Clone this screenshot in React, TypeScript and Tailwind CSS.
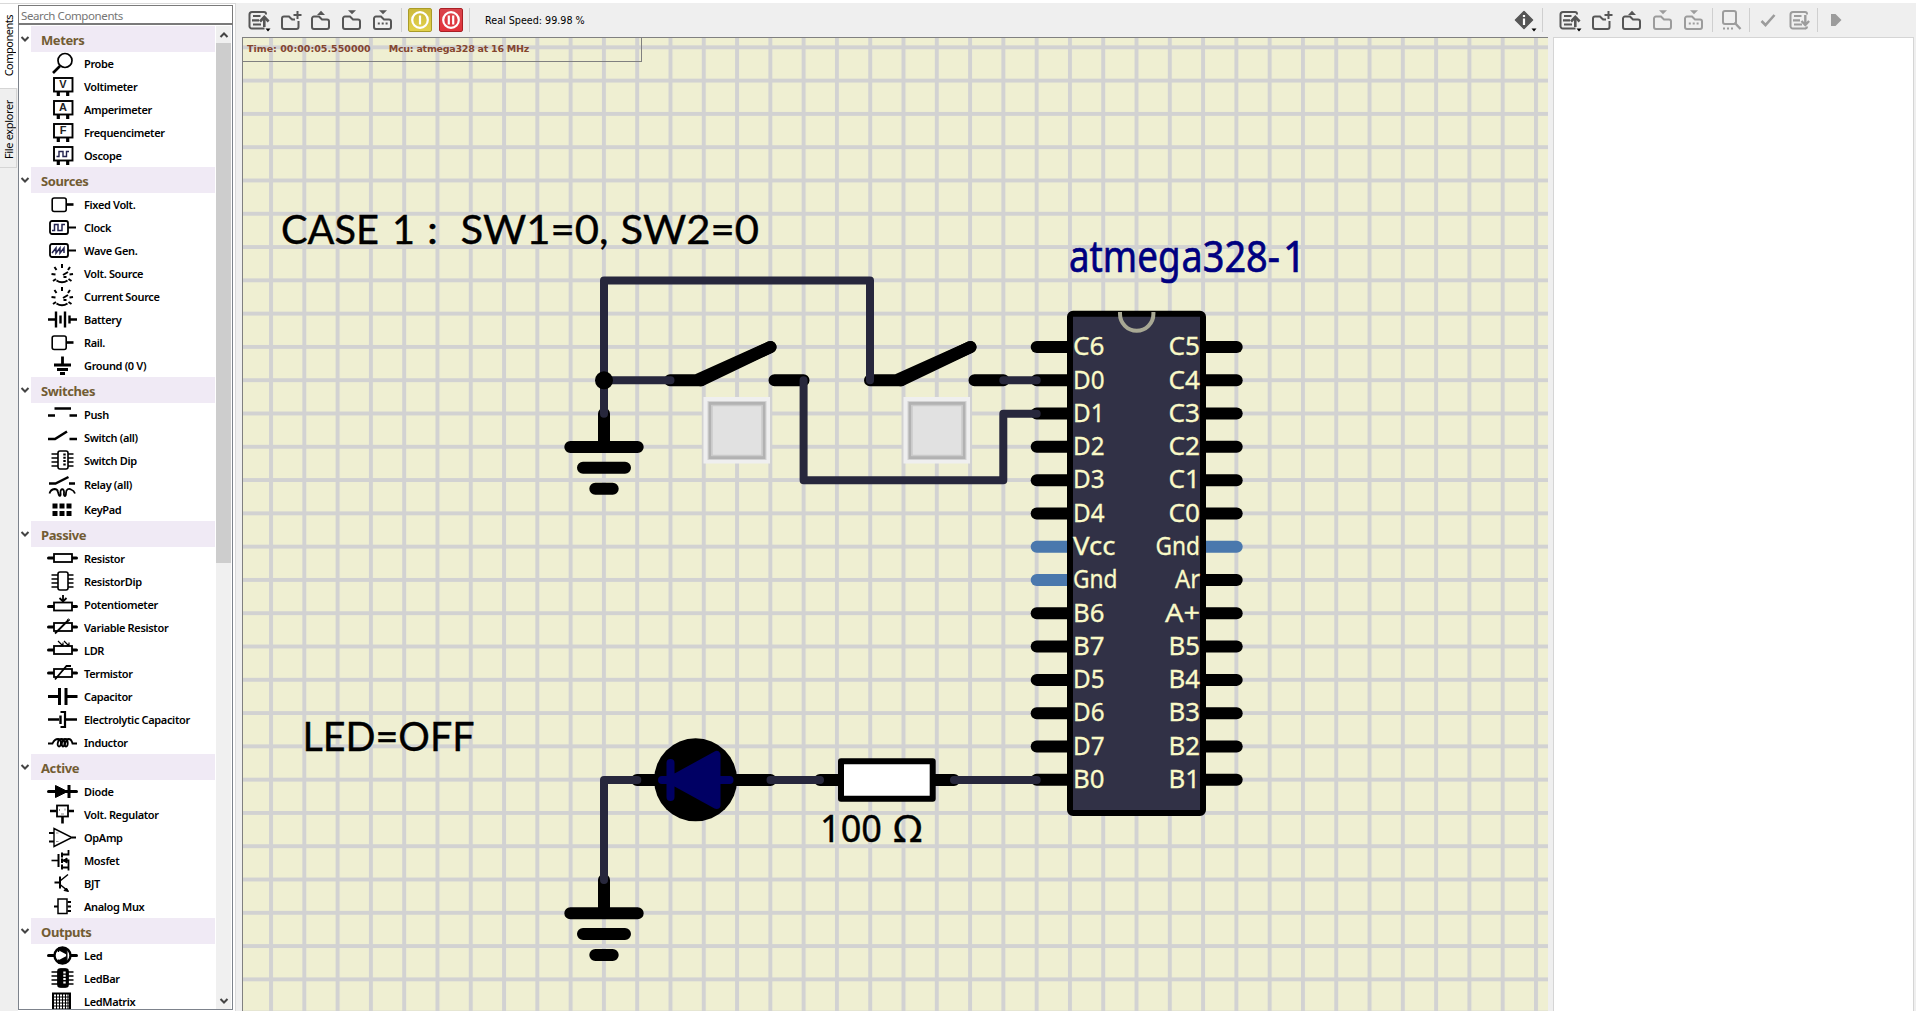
import React from 'react';

type IconFn = () => React.ReactNode;

const chipBody = (
  <>
    <rect x="12" y="2" width="10" height="18" rx="2" fill="white" strokeWidth="1.6" />
    <path d="M5.5 5H12M5.5 9H12M5.5 13H12M5.5 17H12M22 5h5.5M22 9h5.5M22 13h5.5M22 17h5.5" strokeWidth="1.6" />
  </>
);

const resistorBody = (y: number) => (
  <>
    <path d={`M2.5 ${y}H8M26 ${y}h4.500`} strokeWidth="3" strokeLinecap="round" />
    <rect x="8" y={y - 4} width="18" height="8" fill="white" strokeWidth="1.8" />
  </>
);

const meter = (letter: string) => (
  <>
    <rect x="8" y="3" width="18.500" height="13.500" strokeWidth="1.900" />
    <path d="M12.300 17v4M21.700 17v4" strokeWidth="3.200" />
    <text x="17" y="13.300" textAnchor="middle" fontFamily="Liberation Sans, sans-serif" fontWeight="700" fontSize="11" fill="#222" stroke="none">
      {letter}
    </text>
  </>
);

const boxLead = (
  <>
    <rect x="6.200" y="5" width="14" height="13.500" rx="2" strokeWidth="1.6" />
    <path d="M20.500 11.500h7" strokeWidth="2.6" />
  </>
);

const waveBox = (d: string) => (
  <>
    <rect x="4" y="5" width="18" height="13" rx="2" strokeWidth="1.8" />
    <path d="M22 11.500h8" strokeWidth="2" />
    <path d={d} stroke="#23234f" strokeWidth="1.5" />
  </>
);

const dial = (
  <path
    d="M16 2v4M8.500 5l2 3M24 5l-2 3M5.500 12l4 .5M23.500 12.500l3.500-.5M7 19l3-2M25.500 19l-3-2M10.500 18.500q5.500 3.500 11 0M17 13l5-3M17.500 15h3"
    strokeWidth="2"
  />
);

const icons: Record<string, IconFn> = {
  Probe: () => (
    <>
      <circle cx="19" cy="8.500" r="7" strokeWidth="1.7" />
      <path d="M14 14L7 21" strokeWidth="2.6" />
    </>
  ),
  Voltimeter: () => meter('V'),
  Amperimeter: () => meter('A'),
  Frequencimeter: () => meter('F'),
  Oscope: () => (
    <>
      {meter('')}
      <path d="M10.500 12.500h2.500v-5h4v5h3.500v-5h2.500" stroke="#23234f" strokeWidth="1.400" />
    </>
  ),
  'Fixed Volt.': () => boxLead,
  Clock: () => waveBox('M6 14.500h2.500v-6h3.500v6h4v-6h3'),
  'Wave Gen.': () => waveBox('M6 14l4-5v5l4-5v5l4-5v5'),
  'Volt. Source': () => dial,
  'Current Source': () => dial,
  Battery: () => (
    <>
      <path d="M2 11.500h8M24 11.500h7" strokeWidth="2.4" />
      <path d="M10 3.500v16M19 3.500v16" strokeWidth="2.4" />
      <path d="M14.500 7.500v8M23.500 7.500v8" strokeWidth="2.4" />
    </>
  ),
  'Rail.': () => boxLead,
  'Ground (0 V)': () => <path d="M16.500 2.500v8M8 11h17M11 15.500h11M14 19.500h5" strokeWidth="2.800" />,
  Push: () => <path d="M2 12.500h7M23.500 12.500h7.500M8.500 5.500H25" strokeWidth="2.600" />,
  'Switch (all)': () => <path d="M2 13h7L21 5.500M23.500 13h7.500" strokeWidth="2.600" />,
  'Switch Dip': () => (
    <>
      {chipBody}
      <path d="M18.500 4.500v13" strokeWidth="2.400" strokeDasharray="2 1.300" />
    </>
  ),
  'Relay (all)': () => (
    <>
      <path d="M3 9.500h6.500L22.500 3M23 9.500h6" strokeWidth="2.400" />
      <path d="M3.500 19.500q1-4 5-4.500 3 0 3.500 3c1 5 3 5 2.500 1-.5-5 4-5 3.500 0-.5 4 2 4 2 0 0-4 3-5 5-3.500q3 1 4 4" strokeWidth="1.800" />
    </>
  ),
  KeyPad: () => <path d="M6.500 8h5M13.500 8h5M20.500 8h5M6.500 15.500h5M13.500 15.500h5M20.500 15.500h5" strokeWidth="5" />,
  Resistor: () => resistorBody(11),
  ResistorDip: () => chipBody,
  Potentiometer: () => (
    <>
      {resistorBody(13.500)}
      <path d="M17 2v6M13.500 5l3.500 3.500L20.500 5" strokeWidth="1.800" />
    </>
  ),
  'Variable Resistor': () => (
    <>
      {resistorBody(11)}
      <path d="M9 17.500L22.500 4" strokeWidth="1.800" />
      <circle cx="22.500" cy="4" r="1" />
    </>
  ),
  LDR: () => (
    <>
      {resistorBody(11)}
      <path d="M12 2l5 5M17 3.500V7h-3.500M18 2l5 5M23 3.500V7h-3.500" strokeWidth="1.200" />
    </>
  ),
  Termistor: () => (
    <>
      {resistorBody(11)}
      <path d="M9 17.500L20.500 4H25" strokeWidth="1.800" />
    </>
  ),
  Capacitor: () => <path d="M2 11.500h11M20.500 11.500h11M13.500 3v17M20 3v17" strokeWidth="3" />,
  'Electrolytic Capacitor': () => (
    <>
      <path d="M2 11.500h11M19 11.500h12" strokeWidth="2.400" />
      <path d="M14.500 7.500v8.500" strokeWidth="2.400" />
      <path d="M14.500 4h4.500v15h-4.500" strokeWidth="2.200" />
    </>
  ),
  Inductor: () => (
    <path
      d="M2 12.500h4.500q2-4.500 5.500-4.500c4 0 3.500 7.500 1 7.500s-1.500-7.500 2.500-7.500 3.500 7.500 1.500 7.500-1.500-7.500 2-7.500 3.500 7.500 1 7.500 0-7.500 2.500-7.500q3 0 4 4.500H31"
      strokeWidth="1.800"
    />
  ),
  Diode: () => (
    <>
      <path d="M2.500 11.500h28" strokeWidth="3" strokeLinecap="round" />
      <path d="M9.500 5.500v12l12-6z" fill="black" />
      <path d="M23 5v13" strokeWidth="3" />
    </>
  ),
  'Volt. Regulator': () => (
    <>
      <rect x="11" y="2.500" width="11" height="11" strokeWidth="1.800" />
      <path d="M4 8h6.500M22.500 8H28M16.500 14v6.500" strokeWidth="2.600" />
      <path d="M13.500 6v2M19 5.500v2M15 11h3" stroke="#888" strokeWidth="1" />
    </>
  ),
  OpAmp: () => (
    <>
      <path d="M8 2.500v18L26 11.500z" strokeWidth="1.400" />
      <path d="M3 7h5M3 15.500h5M26 11.500h4" strokeWidth="1.800" />
      <path d="M10 7h2.500M10 15.500h2.500" strokeWidth=".8" stroke="#777" />
    </>
  ),
  Mosfet: () => (
    <>
      <path d="M5.500 11.500H12" strokeWidth="1.600" />
      <path d="M12.500 5v13M16 3.500v5M16 9.500v4.500M16 15.500v5" strokeWidth="2" />
      <path d="M16 5.500h6.500V1M16 11.500h6.500v10M16 18.500h6" strokeWidth="1.800" />
      <path d="M17 11.500l4-2.500v5z" fill="black" />
    </>
  ),
  BJT: () => (
    <>
      <path d="M8.500 10.500H14M14 4.500v12" strokeWidth="2" />
      <path d="M14 9l8-6.500M14 12.500l8 6.500" strokeWidth="1.500" />
      <path d="M22.500 19.500l-4.500-1 2.500-2.500z" fill="black" />
    </>
  ),
  'Analog Mux': () => (
    <>
      <rect x="12" y="4" width="9" height="14.500" strokeWidth="1.500" />
      <path d="M8 11.500h4M21.500 7H25M21.500 11.500H25M21.500 16H25" strokeWidth="2" />
    </>
  ),
  Led: () => (
    <>
      <path d="M2.500 11.500h28" strokeWidth="3" strokeLinecap="round" />
      <circle cx="16.500" cy="11.500" r="8" fill="white" strokeWidth="2.400" />
      <path d="M12 3.500h7l1.500 1v6L12 6zM20.500 19l-8.500.5V16.500l8.500-4.500z" fill="black" stroke="none" />
      <path d="M12.500 4v4M12.500 15.500v4M20.800 5v13" strokeWidth="1.400" />
    </>
  ),
  LedBar: () => (
    <>
      {chipBody}
      <rect x="12" y="2" width="10" height="18" rx="3" fill="black" />
      <path d="M18.500 4.500v13" stroke="white" strokeWidth="2.400" strokeDasharray="2 1.300" />
    </>
  ),
  LedMatrix: () => (
    <>
      <rect x="7" y="3.500" width="17" height="18" strokeWidth="2" />
      <path d="M10.500 4v17M13.500 4v17M16.500 4v17M19.500 4v17M22 4v17M7 7h17M7 10h17M7 13h17M7 16h17M7 19h17" strokeWidth="1" />
    </>
  ),
};

const groups: { title: string; items: string[] }[] = [
  { title: 'Meters', items: ['Probe', 'Voltimeter', 'Amperimeter', 'Frequencimeter', 'Oscope'] },
  {
    title: 'Sources',
    items: ['Fixed Volt.', 'Clock', 'Wave Gen.', 'Volt. Source', 'Current Source', 'Battery', 'Rail.', 'Ground (0 V)'],
  },
  { title: 'Switches', items: ['Push', 'Switch (all)', 'Switch Dip', 'Relay (all)', 'KeyPad'] },
  {
    title: 'Passive',
    items: [
      'Resistor',
      'ResistorDip',
      'Potentiometer',
      'Variable Resistor',
      'LDR',
      'Termistor',
      'Capacitor',
      'Electrolytic Capacitor',
      'Inductor',
    ],
  },
  { title: 'Active', items: ['Diode', 'Volt. Regulator', 'OpAmp', 'Mosfet', 'BJT', 'Analog Mux'] },
  { title: 'Outputs', items: ['Led', 'LedBar', 'LedMatrix'] },
];

function Chevron({ up = false }: { up?: boolean }) {
  return (
    <svg width="10" height="8" viewBox="0 0 10 8" fill="none" stroke="#444" strokeWidth="2">
      <path d={up ? 'M1.500 6L5 2.500 8.500 6' : 'M1.500 2L5 5.500 8.500 2'} />
    </svg>
  );
}

function SideTabs() {
  return (
    <div className="flex w-[18px] shrink-0 flex-col font-['Noto_Sans'] text-[11px] text-black">
      <div className="flex h-[85px] items-center justify-center border-t border-[#d9d9d9] bg-white pr-0.5">
        <span className="rotate-180 whitespace-nowrap leading-none tracking-[-0.5px] [writing-mode:vertical-rl]">Components</span>
      </div>
      <div className="flex h-20 w-[17px] items-center justify-center border border-l-0 border-[#d5d5d5] bg-[#efefef] pt-1">
        <span className="rotate-180 whitespace-nowrap leading-none tracking-[-0.35px] [writing-mode:vertical-rl]">File explorer</span>
      </div>
    </div>
  );
}

function ComponentTree() {
  return (
    <div className="flex min-h-0 flex-1 border border-t-0 border-[#7d838c] bg-white pt-px">
      <div className="min-w-0 flex-1 overflow-hidden">
        {groups.map((g) => (
          <section key={g.title}>
            <div className="flex h-[26px]">
              <div className="flex w-3 items-center justify-center">
                <Chevron />
              </div>
              <div className="mr-px flex flex-1 items-center bg-[#f0eaf5] pl-2.5 pt-[3px] font-['Noto_Sans'] text-[13px] font-bold text-[#725c33]">
                <span className="tracking-[-0.4px]">{g.title}</span>
              </div>
            </div>
            {g.items.map((name) => (
              <div key={name} className={name === 'Relay (all)' ? 'flex h-[26px] items-center pl-[27px]' : 'flex h-[23px] items-center pl-[27px]'}>
                <svg width="32" height="23" viewBox="0 0 32 23" fill="none" stroke="black" className="shrink-0">
                  {icons[name]()}
                </svg>
                <span className="ml-[6px] mt-px whitespace-nowrap font-['Noto_Sans'] text-[11px] font-semibold tracking-[-0.35px] text-black">
                  {name}
                </span>
              </div>
            ))}
          </section>
        ))}
      </div>
      <div className="flex w-[15px] flex-col bg-[#f0f0f0]">
        <div className="flex h-[17px] items-center justify-center">
          <Chevron up />
        </div>
        <div className="h-[520px] bg-[#cdcdcd]" />
        <div className="mt-auto flex h-[17px] items-center justify-center">
          <Chevron />
        </div>
      </div>
      <div className="w-px bg-white" />
    </div>
  );
}

function Caret() {
  return <path d="M19.500 20.500h5l-2.500 3z" fill="black" stroke="none" />;
}

const folder = 'M5 8.500h5l3 3h5a2 2 0 0 1 2 2v5.500a2 2 0 0 1-2 2H5a2 2 0 0 1-2-2V10.500a2 2 0 0 1 2-2z';

function Tool({ kind, muted = false, className = '' }: { kind: string; muted?: boolean; className?: string }) {
  const c = muted ? '#9c9c9c' : '#565656';
  return (
    <svg width="24" height="24" viewBox="0 0 24 24" fill="none" stroke={c} strokeWidth="2" className={`shrink-0 overflow-visible ${className}`}>
      {(kind === 'recent' || kind === 'upload') && (
        <>
          <path d="M20 6.500V6a2 2 0 0 0-2-2H6a2.500 2.500 0 0 0-2.500 2.500v11A2.500 2.500 0 0 0 6 20.500h12.500" />
          <path d="M7 8h7.500M6 12.300h7M7 16.500h8" strokeWidth="2.200" />
          {kind === 'recent' ? (
            <>
              <path d="M18.300 9.500v9.500" strokeWidth="2.600" />
              <path d="M14 13.500l4.300-4.500 4.300 4.500" strokeWidth="2.600" />
              <Caret />
            </>
          ) : (
            <>
              <path d="M18.300 7v9.500M14.500 13l3.800 4 3.800-4" strokeWidth="2.400" />
              <path d="M20 18.500a2 2 0 0 1-2 2" />
            </>
          )}
        </>
      )}
      {kind === 'new' && (
        <>
          <path d="M13 11.500l-3-3H5a2 2 0 0 0-2 2V19a2 2 0 0 0 2 2h12.500a2 2 0 0 0 2-2v-6" />
          <path d="M12.500 11.500H16M18.500 3v8M14.500 7h8" />
        </>
      )}
      {kind === 'open' && (
        <>
          <path d={folder} />
          <path d="M8 7h8L12 2.800z" fill={c} stroke="none" />
        </>
      )}
      {(kind === 'save' || kind === 'saveas') && (
        <>
          <path d={folder} />
          <path d="M8 2.300h8L12 6.300z" fill={c} stroke="none" />
          {kind === 'saveas' && <path d="M6.800 15.500h2M10.700 15.500h2M14.600 15.500h2" strokeWidth="2.200" />}
        </>
      )}
      {kind === 'find' && (
        <>
          <rect x="4" y="3" width="13" height="13" rx="2" />
          <path d="M15.500 14.500l6 6.500" strokeWidth="2.400" />
          <path d="M4 20.500h2M8 20.500h2M12 20.500h2" />
        </>
      )}
      {kind === 'check' && <path d="M5.500 13l4 4 9-10" strokeWidth="2.600" />}
      {kind === 'play' && <path d="M7 6h4.500l6 6-6 6H7z" fill={c} stroke="none" />}
      {kind === 'info' && (
        <>
          <path d="M12 3.500L20.500 12 12 20.500 3.500 12z" fill={c} strokeLinejoin="round" strokeWidth="1.500" />
          <path d="M12 10.500V17M12 7v2" stroke="white" strokeWidth="2.200" />
          <Caret />
        </>
      )}
    </svg>
  );
}

function Separator({ className = '' }: { className?: string }) {
  return <div className={`h-6 w-px shrink-0 bg-[#cfcfcf] ${className}`} />;
}

function RoundButton({ pause = false }: { pause?: boolean }) {
  return (
    <div
      className={
        pause
          ? 'ml-[7px] flex size-6 shrink-0 items-center justify-center rounded-[2px] border border-[#a92025] bg-linear-to-b from-[#d9444c] to-[#e2323a]'
          : 'ml-[6px] flex size-6 shrink-0 items-center justify-center rounded-[2px] border border-[#a99b28] bg-linear-to-b from-[#ccb93a] to-[#e3d24c]'
      }
    >
      <svg width="20" height="20" viewBox="0 0 20 20" fill="none" stroke="white" strokeWidth="2.200">
        <circle cx="10" cy="10" r="7.800" />
        {pause ? <path d="M7.800 5.500v9M12.200 5.500v9" /> : <path d="M10 5.500v9" />}
      </svg>
    </div>
  );
}

const leftPins = ['C6', 'D0', 'D1', 'D2', 'D3', 'D4', 'Vcc', 'Gnd', 'B6', 'B7', 'D5', 'D6', 'D7', 'B0'];
const rightPins = ['C5', 'C4', 'C3', 'C2', 'C1', 'C0', 'Gnd', 'Ar', 'A+', 'B5', 'B4', 'B3', 'B2', 'B1'];
const labelWidth: Record<string, number> = { Vcc: 42.500, Gnd: 44.500, Ar: 25, 'A+': 35 };
const isPower = (p: string, i: number) => p === 'Vcc' || (p === 'Gnd' && i > 5);

function Ground({ y }: { y: number }) {
  return (
    <path
      d={`M604 ${y}v33.300M570.300 ${y + 33.300}h67.400M583 ${y + 54}h42M595.300 ${y + 75}h17.400`}
      stroke="black"
      strokeWidth="12"
      strokeLinecap="round"
    />
  );
}

function SwitchPart({ x }: { x: number }) {
  return (
    <>
      <path d={`M${x} 380.300h31M${x + 26.500} 380.300L${x + 100.500} 347M${x + 104.500} 380.300h29`} stroke="black" strokeWidth="12" strokeLinecap="round" />
      <path d={`M${x + 31} 380.300L${x + 100.500} 347`} stroke="black" strokeWidth="12" strokeLinecap="round" />
      <rect x={x + 33.500} y="397" width="66.500" height="66.500" fill="#efefef" />
      <rect x={x + 38} y="401.500" width="58" height="58" fill="#e1e1e1" stroke="#d2d2d2" strokeWidth="1" />
      <rect x={x + 40} y="403.500" width="54" height="54" stroke="#b2b2b2" strokeWidth="3" />
      <rect x={x + 42} y="405.500" width="50" height="50" stroke="#cacaca" strokeWidth="1.500" />
    </>
  );
}

function Label({ x, y, w, children }: { x: number; y: number; w: number; children: string }) {
  return (
    <text x={x} y={y} textLength={w} lengthAdjust="spacingAndGlyphs">
      {children}
    </text>
  );
}

function Circuit() {
  return (
    <svg width="1306" height="974" viewBox="242 37 1306 974" fill="none" className="block">
      <defs>
        <pattern id="grid" x="269.050" y="45.350" width="33.288" height="33.288" patternUnits="userSpaceOnUse">
          <path d="M2 0v33.288M0 2h33.288" stroke="#d2d2d2" strokeWidth="4" />
        </pattern>
      </defs>
      <rect x="242" y="37" width="1306" height="974" fill="#efefd2" />
      <rect x="242" y="37" width="1306" height="974" fill="url(#grid)" />

      <g fill="black" stroke="black" strokeWidth=".4" fontFamily="Lato, sans-serif" fontSize="41.500">
        <Label x={281} y={244.400} w={98}>CASE</Label>
        <Label x={392} y={244.400} w={23}>1</Label>
        <Label x={427} y={244.400} w={11}>:</Label>
        <Label x={460.500} y={244.400} w={148}>SW1=0,</Label>
        <Label x={620.500} y={244.400} w={138.500}>SW2=0</Label>
        <Label x={302.500} y={750.700} w={172}>LED=OFF</Label>
      </g>

      <Ground y={413.700} />
      <Ground y={880} />
      <SwitchPart x={670} />
      <SwitchPart x={870} />

      <path d="M637 780h20M735 780h35.500M820 780h20M934 780h20" stroke="black" strokeWidth="12" strokeLinecap="round" />
      <circle cx="695.600" cy="779.800" r="41.500" fill="black" />
      <path d="M662 780h67.500M670.500 763v34M671 780l45.500-25v50z" stroke="#000064" fill="#000064" strokeWidth="8" strokeLinecap="round" strokeLinejoin="round" />
      <rect x="841" y="761.300" width="91.700" height="37.400" fill="white" stroke="black" strokeWidth="6" strokeLinejoin="round" />
      <g fontFamily="Noto Sans, sans-serif" fontSize="38" fill="black" stroke="black" strokeWidth=".4">
        <Label x={820} y={841.700} w={62}>100</Label>
        <Label x={893.500} y={841.700} w={28.500}>Ω</Label>
      </g>

      {leftPins.map((p, i) => (
        <path key={i} d={`M1036.700 ${347 + i * 33.288}H1068`} stroke={isPower(p, i) ? '#4a78ad' : 'black'} strokeWidth="12" strokeLinecap="round" />
      ))}
      {rightPins.map((p, i) => (
        <path key={i} d={`M1205 ${347 + i * 33.288}h31.700`} stroke={isPower(p, i) ? '#4a78ad' : 'black'} strokeWidth="12" strokeLinecap="round" />
      ))}
      <rect x="1070" y="313.700" width="133" height="499.300" rx="3" fill="#313146" stroke="black" strokeWidth="6" />
      <path d="M1120 312v2a16.700 16.700 0 0 0 33.400 0v-2" stroke="#a8a894" strokeWidth="4" />
      <g fill="#fafac8" stroke="#fafac8" strokeWidth=".3" fontFamily="Noto Sans, sans-serif" fontSize="25.500">
        {leftPins.map((p, i) => (
          <Label key={i} x={1073} y={355.300 + i * 33.288} w={labelWidth[p] ?? 31.500}>
            {p}
          </Label>
        ))}
        {rightPins.map((p, i) => (
          <Label key={i} x={1200 - (labelWidth[p] ?? 31.500)} y={355.300 + i * 33.288} w={labelWidth[p] ?? 31.500}>
            {p}
          </Label>
        ))}
      </g>
      <g fontFamily="Noto Sans, sans-serif" fontSize="43" fill="#000080" stroke="#000080" strokeWidth=".7">
        <Label x={1069} y={271.700} w={111.500}>atmeg</Label>
        <Label x={1181.500} y={271.700} w={98.500}>a328-</Label>
        <Label x={1283} y={271.700} w={23}>1</Label>
      </g>

      <g stroke="#27273c" strokeWidth="8" strokeLinecap="round" strokeLinejoin="round">
        <path d="M604 413.700V280.400h266v99.900M604 380.300h66.500" />
        <path d="M803.600 380.300V480.200h199.700v-66.500h33.400M1003.300 380.300h33.400" />
        <path d="M604 880V780h33.300M770.500 780H820M954 780h82.700" />
      </g>
      <circle cx="604" cy="380.300" r="9" fill="black" />
    </svg>
  );
}

export default function App() {
  return (
    <div className="flex h-[1011px] w-[1916px] overflow-hidden border-t-[3px] border-white bg-[#efefef]">
      <SideTabs />
      <aside className="flex w-[218px] shrink-0 flex-col border-r border-t border-[#d9d9d9] bg-white pb-px pr-0.5 pt-px">
        <div className="flex h-5 items-center border border-b-2 border-[#7a7a7a] bg-white pl-[2px] pt-0.5 font-['Noto_Sans'] text-[11.500px] tracking-[-0.4px] text-[#757575]">
          Search Components
        </div>
        <ComponentTree />
      </aside>
      <main className="ml-[6px] flex w-[1306px] shrink-0 flex-col">
        <div className="flex h-[34px] items-center pl-1">
          <Tool kind="recent" />
          <Tool kind="new" className="ml-[9px]" />
          <Tool kind="open" className="ml-[6px]" />
          <Tool kind="save" className="ml-[7px]" />
          <Tool kind="saveas" className="ml-[7px]" />
          <Separator className="ml-[6px]" />
          <RoundButton />
          <RoundButton pause />
          <Separator className="ml-[6px]" />
          <span className="ml-[15px] mt-0.5 whitespace-nowrap font-['DejaVu_Sans'] text-[9.600px] text-black">Real Speed: 99.98 %</span>
          <Tool kind="info" className="ml-auto mr-[12px]" />
        </div>
        <div className="relative flex-1 overflow-hidden">
          <Circuit />
          <div className="absolute inset-0 border-l border-t border-[#808080]" />
          <div className="absolute left-0 top-0 flex h-[25px] w-[400px] items-center gap-[18px] border border-[#808080] pl-1 font-['DejaVu_Sans'] text-[9.500px] font-bold text-[#84452f]">
            <span className="whitespace-nowrap">Time: 00:00:05.550000</span>
            <span className="whitespace-nowrap tracking-[-0.25px]">Mcu: atmega328 at 16 MHz</span>
          </div>
        </div>
      </main>
      <section className="flex flex-1 flex-col">
        <div className="-ml-[6px] flex h-[34px] items-center">
          <Separator />
          <Tool kind="recent" className="ml-[14px]" />
          <Tool kind="new" className="ml-[9px]" />
          <Tool kind="open" className="ml-[6px]" />
          <Tool kind="save" muted className="ml-[7px]" />
          <Tool kind="saveas" muted className="ml-[7px]" />
          <Separator className="ml-[6px]" />
          <Tool kind="find" muted className="ml-[6px]" />
          <Separator className="ml-[6px]" />
          <Tool kind="check" muted className="ml-[6px]" />
          <Tool kind="upload" muted className="ml-[7px]" />
          <Separator className="ml-[6px]" />
          <Tool kind="play" muted className="ml-[6px]" />
        </div>
        <div className="ml-[5px] mr-0.5 flex-1 border border-b-0 border-[#d5d5d5] bg-white" />
      </section>
    </div>
  );
}
